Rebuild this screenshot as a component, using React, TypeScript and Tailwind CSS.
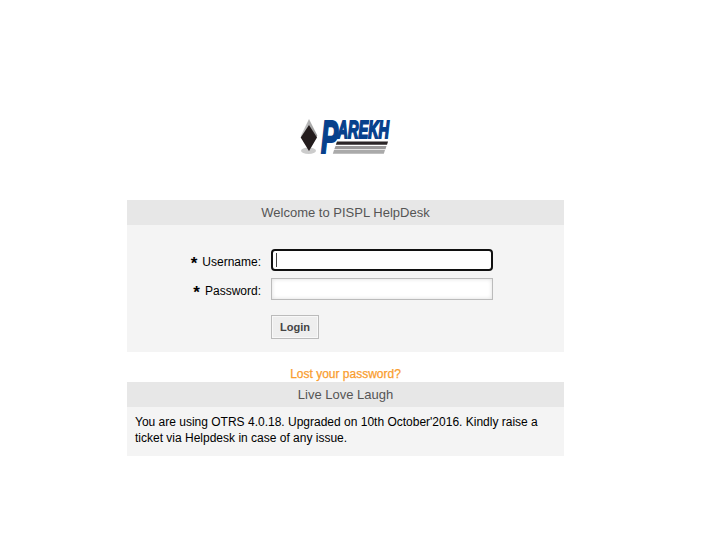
import React from "react";

function Logo() {
  return (
    <svg width="96" height="44" viewBox="299 116 96 44" overflow="visible" aria-label="Parekh">
      <defs>
        <linearGradient id="gem" x1="0" y1="0" x2="1" y2="0">
          <stop offset="0" stopColor="#d0d0d0" />
          <stop offset="1" stopColor="#939393" />
        </linearGradient>
      </defs>
      <ellipse cx="308.5" cy="150.8" rx="7.5" ry="3.2" fill="#cccccc" />
      <path d="M309 119 L317.3 135.5 L309 151 L300.7 136 Z" fill="url(#gem)" />
      <path d="M309 125 L317 137.5 L309 151 L300.7 137.5 Z" fill="#231c1d" />
      <path d="M337 141.5H388L387 144.8H335.8Z" fill="#2b2527" />
      <path d="M335.5 146H386.5L385.5 149.2H334.3Z" fill="#9a9899" />
      <path d="M334 150H385L383.8 153.8H332.8Z" fill="#aaa" />
      <g fontFamily="Liberation Sans" fontWeight="bold" fontStyle="italic" fill="#07418c" stroke="#07418c">
        <text x="0" y="0" fontSize="46" strokeWidth="2.2" transform="translate(321 152.9) scale(.56 1)">P</text>
        <text x="0" y="0" fontSize="23.5" strokeWidth="1.8" textLength="77" lengthAdjust="spacingAndGlyphs" transform="translate(337.5 138) scale(.67 1)">AREKH</text>
      </g>
    </svg>
  );
}

function Heading({ children }: { children: React.ReactNode }) {
  return <h2 className="h-[25px] bg-[#e7e7e7] text-center text-[13px] leading-[25px] text-[#555]">{children}</h2>;
}

function Label({ id, children }: { id: string; children: React.ReactNode }) {
  return (
    <label htmlFor={id} className="flex w-[134px] justify-end gap-[5px] pt-[2px] leading-[22px]">
      <span className="text-[17px] font-bold leading-[25px]">*</span>
      <span>{children}</span>
    </label>
  );
}

export default function App() {
  return (
    <main className="flex h-[535px] w-[710px] flex-col bg-white pl-[127px] pt-[116px] font-['Liberation_Sans',Arial,sans-serif] text-[12px] text-black">
      <div className="h-[84px] pl-[172px]"><Logo /></div>
      <div className="w-[437px]">
        <Heading>Welcome to PISPL HelpDesk</Heading>
        <form className="h-[127px] bg-[#f4f4f4] pt-[24px]" onSubmit={(e) => e.preventDefault()}>
          <div className="flex h-[22px] gap-[10px]">
            <Label id="user">Username:</Label>
            <div className="flex h-[22px] w-[222px] items-center rounded-[4px] border-2 border-[#101010] bg-white pl-[3px]">
              <span className="h-[14px] w-px bg-[#444]" />
              <input id="user" className="w-[200px] outline-none" />
            </div>
          </div>
          <div className="mt-[7px] flex h-[22px] gap-[10px]">
            <Label id="password">Password:</Label>
            <input id="password" type="password" className="h-[22px] w-[222px] border border-[#bbb] bg-white shadow-[inset_0_0_4px_#ddd] outline-none" />
          </div>
          <button className="ml-[144px] mt-[15px] block h-[24px] w-[48px] border border-[#bbb] bg-[#eee] text-[11px] font-bold text-[#444] shadow-[inset_0_0_0_1px_#f8f8f8]">Login</button>
        </form>
        <div className="h-[30px] pt-[14px] text-center leading-[16px]">
          <a className="text-[#f99d2e] [-webkit-text-stroke:0.25px_#f99d2e]">Lost your password?</a>
        </div>
        <Heading>Live Love Laugh</Heading>
        <p className="h-[49px] bg-[#f4f4f4] px-2 pt-[7px] leading-[16px]">
          You are using OTRS 4.0.18. Upgraded on 10th October'2016. Kindly raise a<br />ticket via Helpdesk in case of any issue.
        </p>
      </div>
    </main>
  );
}
